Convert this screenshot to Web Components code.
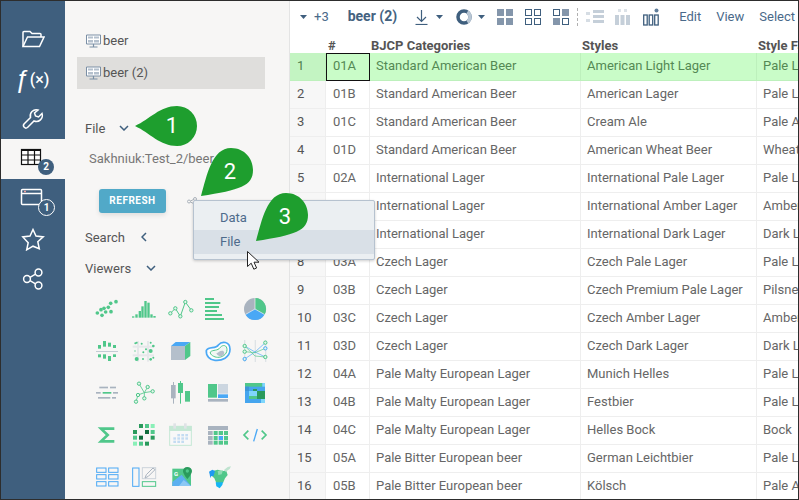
<!DOCTYPE html>
<html>
<head>
<meta charset="utf-8">
<style>
html, body { margin: 0; padding: 0; background: #fff; }
body { font-family: Roboto, "Liberation Sans", sans-serif; }
</style>
</head>
<body>
<app-shell>
    <side-nav slot="nav"></side-nav>
    <tool-panel slot="panel"></tool-panel>
    <grid-toolbar slot="grid"></grid-toolbar>
    <data-grid slot="grid"></data-grid>
    <context-menu slot="over"></context-menu>
    <callout-pin slot="over" label="1" kind="left" style="left:135px;top:106px"></callout-pin>
    <callout-pin slot="over" label="2" kind="down" style="left:201px;top:148px"></callout-pin>
    <callout-pin slot="over" label="3" kind="down" style="left:256px;top:193px"></callout-pin>
    <mouse-cursor slot="over" style="left:247px;top:251px"></mouse-cursor>
</app-shell>
<script>
const shell = document.createElement('template');
shell.innerHTML = `
    <style>
    :host {
        display: block;
        position: relative;
        width: 799px;
        height: 500px;
        box-sizing: border-box;
        border: 1px solid #2d2d2d;
        overflow: hidden;
        background: #fff;
    }
    .layout { display: flex; height: 100%; }
    .grid-area { flex: 1; min-width: 0; display: flex; flex-direction: column; overflow: hidden; }
    </style>
    <div class="layout">
        <slot name="nav"></slot>
        <slot name="panel"></slot>
        <div class="grid-area"><slot name="grid"></slot></div>
    </div>
    <slot name="over"></slot>
`;
customElements.define('app-shell', class extends HTMLElement {
    constructor() {
        super();
        this.attachShadow({mode: 'open'}).appendChild(shell.content.cloneNode(true));
    }
});

const navIcons = {
    folder: `<path d="M2 19.5V5.500a1 1 0 0 1 1-1h6l2 2h8a1 1 0 0 1 1 1v2.500"/><path d="M2 19.500l4.500-9.500H23l-4.500 9.500z"/>`,
    wrench: `<path d="M21 6.500l-3.500 3.500-3-1-1-3L17 3a6 6 0 0 0-7.500 7.500L3 17a2.500 2.500 0 0 0 3.500 3.500L13 14a6 6 0 0 0 8-7.500z"/>`,
    table: `<g stroke="#111" stroke-width="1.200"><rect x="1.500" y="3.500" width="19" height="15" fill="#fff"/><path d="M1.500 4.500h19M1.500 9h19M1.500 14h19M8 4v14M14.500 4v14"/></g>`,
    window: `<rect x="1.500" y="3.500" width="20" height="15" rx="1"/><path d="M1.500 7.500h20"/><path d="M4 5.500h2" stroke="#f0a0a0"/>`,
    star: `<path d="M12 2.500l3 6.600 7.200.8-5.400 4.800 1.500 7.100L12 19.200l-6.300 3.600 1.500-7.100L1.800 9.900 9 9.100z"/>`,
    share: `<circle cx="6" cy="12" r="3.400"/><circle cx="17.500" cy="5.500" r="3.400"/><circle cx="17.500" cy="18.500" r="3.400"/><path d="M9 10.300l5.500-3.100M9 13.700l5.500 3.100"/>`
};

const nav = document.createElement('template');
nav.innerHTML = `
    <style>
    :host {
        display: flex;
        flex-direction: column;
        width: 64px;
        flex: none;
        padding-top: 18px;
        box-sizing: border-box;
        height: 100%;
        background: #3f5f7e;
    }
    .item {
        position: relative;
        height: 40px;
        display: flex;
        align-items: center;
        justify-content: center;
        color: #fff;
    }
    .item.on { background: #f7f6f5; }
    svg { width: 24px; height: 24px; fill: none; stroke: #fff; stroke-width: 1.500; display: block; }
    .fx { display: flex; align-items: center; margin-left: -1px; }
    .fx i { font: 25px "Liberation Sans", sans-serif; }
    .fx span { font: 500 16px Roboto, sans-serif; }
    .badge {
        position: absolute;
        left: 37px;
        top: 20px;
        width: 16px;
        height: 16px;
        border-radius: 50%;
        background: #3f5f7e;
        color: #fff;
        font: 700 10px/16px Roboto, sans-serif;
        text-align: center;
    }
    .badge.ring { box-sizing: border-box; border: 1px solid #fff; line-height: 15px; width: 17px; height: 17px; }
    </style>
    <div class="item"><svg viewBox="0 0 24 24">${navIcons.folder}</svg></div>
    <div class="item"><div class="fx"><i>ƒ</i><span>(×)</span></div></div>
    <div class="item"><svg viewBox="0 0 24 24">${navIcons.wrench}</svg></div>
    <div class="item on"><svg viewBox="0 0 24 24" style="margin:-3px 2px 0 0">${navIcons.table}</svg><div class="badge">2</div></div>
    <div class="item"><svg viewBox="0 0 24 24" style="margin:-3px 2px 0 0">${navIcons.window}</svg><div class="badge ring">1</div></div>
    <div class="item"><svg viewBox="0 0 24 24">${navIcons.star}</svg></div>
    <div class="item"><svg viewBox="0 0 24 24">${navIcons.share}</svg></div>
`;
customElements.define('side-nav', class extends HTMLElement {
    constructor() {
        super();
        this.attachShadow({mode: 'open'}).appendChild(nav.content.cloneNode(true));
    }
});

// coordinates of the viewer icons are in 3x units of the crop they were read from
const G = '#50c78a', B = '#4aa8f5', S = '#a9b3bf', D = '#2a9a5c';
const rects = (list, fill) => list.map(r => `<rect x="${r[0]}" y="${r[1]}" width="${r[2]}" height="${r[3]}" fill="${r[4] || fill}"/>`).join('');
const dots = (list, fill, r) => list.map(p => `<circle cx="${p[0]}" cy="${p[1]}" r="${p[2] || r}" fill="${fill}"/>`).join('');
const rings = (list, color) => list.map(p => `<circle cx="${p[0]}" cy="${p[1]}" r="5" fill="#e4f5ec" stroke="${p[2] || color}" stroke-width="3"/>`).join('');

const viewers = [
    [66, 54, dots([[37,66],[51,73],[48,56],[62,63],[70,49],[77,37],[93,32],[78,62],[57,52]], G, 5.500)],
    [177, 54, rects([[141,76,7,4],[151,70,7,10],[161,60,7,20],[169,46,7,34],[178,30,7,50],[187,35,7,45],[196,70,7,10],[205,75,7,5]], G)],
    [288, 54, `<polyline points="256,67 271,52 286,76 301,33 319,58" fill="none" stroke="${G}" stroke-width="3"/>` + rings([[256,67],[271,52],[286,76],[301,33],[319,58]], G)],
    [399, 54, rects([[360,21,27,6],[360,33,46,6],[360,45,42,6],[360,57,36,6],[360,69,51,6],[360,81,57,6]], G)],
    [510, 54, `<circle cx="510" cy="54" r="33" fill="${S}"/><path d="M510 54V21a33 33 0 0 1 28.600 49.500z" fill="${G}"/><path d="M510 54l28.600 16.500a33 33 0 0 1-57.200 0z" fill="${B}"/><path d="M510 21v33l28.600 16.500M510 54l-28.600 16.500" stroke="#f7f6f5" stroke-width="2" fill="none"/>`],

    [66, 180, rects([[33,180,66,3,'#c4ccd4'],[39,162,9,11],[54,150,9,17],[69,155,9,12],[84,162,9,9],[39,190,9,9],[54,190,9,13],[69,195,9,15],[84,190,9,8]], G)],
    [177, 180, rects([[143,164,64,6,'#e6e8ea'],[143,190,64,6,'#e6e8ea'],[156,150,6,62,'#e6e8ea'],[186,150,6,62,'#e6e8ea']]) + dots([[151,157,3],[155,155,3],[170,158,3],[197,155,3],[205,165,4],[183,175,3],[197,180,6],[175,184,3],[155,204,6],[174,204,3],[197,205,4],[205,200,3],[150,180,2]], G)],
    [288, 180, `<rect x="258" y="165" width="42" height="42" fill="#b4bfcb"/><path d="M258 165l14-12h44l-16 12z" fill="${B}"/><path d="M300 165l16-12v42l-16 12z" fill="${G}"/>`],
    [399, 180, `<path d="M364 178c8-13 28-3 36-16 10-12 35-12 35 13s-25 35-45 33c-15-1-28-13-26-30z" fill="#fff" stroke="${B}" stroke-width="5"/><path d="M376 183c8-8 22-2 30-14 8-9 20-7 20 7 0 15-16 24-28 23-10 0-24-8-22-16z" fill="#f2f7f4" stroke="${G}" stroke-width="3"/><path d="M394 187c6-2 10-8 17-8 7 0 9 8 4 14-5 5-15 5-21-6z" fill="#b4bfcb"/>`],
    [510, 180, rects([[509,147,4,66,'#dfe3e6'],[540,147,4,66,'#dfe3e6'],[477,147,4,66,'#dfe3e6']]) + `<path d="M479 165l31 18 31-28M479 204l31-21 31 15" fill="none" stroke="${B}" stroke-width="2"/><path d="M479 182l31 3 31-13M479 165l31 30 31 3" fill="none" stroke="${G}" stroke-width="2"/>` + rings([[479,165],[479,182],[479,204,B],[541,155],[541,172,B],[541,198]], G)],

    [66, 66, rects([[43,47,26,5],[75,47,18,5],[33,63,14,5],[84,63,15,5],[39,78,37,5],[81,78,12,5]], S) + rects([[53,63,26,5]], G)],
    [177, 66, `<path d="M178 65L162 38M178 65l10-17M178 65l25-4M178 65v17M178 65l-19 7M159 72l-6 20" stroke="${G}" stroke-width="2.500" fill="none"/>` + rings([[162,38],[188,48],[203,61],[178,82],[159,72],[153,92]], G)],
    [288, 66, rects([[264,33,3,65],[258,42,14,40]], S) + rects([[285,30,3,68],[279,36,15,30],[300,60,15,32]], G)],
    [399, 66, rects([[369,39,27,41]], G) + rects([[399,39,30,29,'#ccd6e0'],[399,70,30,11,B],[369,84,60,8,S]])],
    [510, 66, rects([[480,36,60,60,'#45a5ee'],[480,36,52,11,G],[532,36,8,11,'#7fd6fb'],[504,54,12,10,D],[516,60,24,24,D],[492,60,24,15,'#7fd6fb'],[492,75,24,9,G],[480,47,12,13,'#3d96d6'],[528,84,12,12,'#7fd6fb']])],

    [66, 192, `<polyline points="88,173 48,173 68,192 48,211 88,211" fill="none" stroke="${G}" stroke-width="8"/>`],
    [177, 192, rects([[162,159,12,12,D],[180,159,12,12,G],[197,159,12,12,'#8af0b8'],[144,177,12,12,D],[180,177,12,12,'#0e6b3a'],[197,177,12,12,G],[144,194,12,12,G],[162,194,12,12,'#0e6b3a'],[197,194,12,12,D],[144,212,12,12,'#8af0b8'],[162,212,12,12,G],[180,212,12,12,D]])],
    [288, 192, `<rect x="254" y="166" width="65" height="57" fill="#f8f8f8" stroke="#c5e8d5" stroke-width="3"/>` + rects([[253,165,67,15,'#c5e8d5'],[265,157,8,16,'#dfe3e6'],[297,157,8,16,'#dfe3e6']]) + rects([[277,189,8,7],[289,189,8,7],[301,189,8,7],[265,199,8,7],[277,199,8,7],[289,199,8,7],[301,199,8,7],[265,209,8,7],[277,209,8,7],[289,209,8,7]], '#c4dcf2')],
    [399, 192, rects([[369,165,60,12],[369,180,14,12],[369,195,14,12],[369,209,14,12]], S) + rects([[386,180,12,12],[401,180,13,12],[417,180,12,12],[386,195,12,12],[417,195,12,12],[386,209,12,12],[401,209,13,12],[417,209,12,12]], G) + rects([[401,195,13,12]], B)],
    [510, 192, `<path d="M490 179l-13 13 13 13M530 179l13 13-13 13" fill="none" stroke="${G}" stroke-width="5"/><path d="M517 174l-11 37" stroke="${B}" stroke-width="4"/>`],

    [66, 318, `<g fill="none" stroke="${B}" stroke-width="3">` + [[35,291],[71,291],[35,311],[71,311],[35,332],[71,332]].map(p => `<rect x="${p[0]}" y="${p[1]}" width="28" height="13"/>`).join('') + `</g>`],
    [177, 318, `<rect x="143" y="291" width="19" height="55" fill="none" stroke="${B}" stroke-width="3"/><rect x="172" y="290" width="40" height="33" fill="none" stroke="#ccd3da" stroke-width="3"/><path d="M180 321l4-10 20-20 6 5-20 20z" fill="#f7f6f5" stroke="${S}" stroke-width="3"/><rect x="172" y="332" width="40" height="14" fill="none" stroke="${G}" stroke-width="3"/>`],
    [288, 318, `<rect x="262" y="293" width="56" height="52" fill="${G}"/><path d="M262 345v-12l28-22 28 34z" fill="#5cb0f0"/><path d="M282 345l14-18 22 18z" fill="#8cc8f5"/><path d="M307 288c-8 0-13 6-13 12 0 9 13 24 13 24s14-15 14-24c0-6-6-12-14-12z" fill="${D}"/><circle cx="307" cy="300" r="5" fill="${G}"/><text x="267" y="314" font-family="Roboto, sans-serif" font-weight="700" font-size="18" fill="#fff">G</text>`],
    [399, 318, `<path d="M384 300l14-4 14 4h12l4 12-8 10-6 14h-20l-6-14-8-8z" fill="${G}"/><path d="M372 302l10-6 8 4-4 14-8 2-2 6-2-12z" fill="#1f9af2"/><path d="M392 334h22l-2 8-8 10-10-6z" fill="#14b4f5"/><path d="M416 298l12-10 10-2-4 8-12 8z" fill="#bfe3cf"/><path d="M398 300l16-2-4 12-10 2z" fill="#8fdcb4"/>`]
];

const vicon = document.createElement('template');
vicon.innerHTML = `
    <style>
    :host { display: flex; align-items: center; justify-content: center; width: 37px; height: 42px; }
    svg { width: 30px; height: 30px; display: block; overflow: visible; }
    </style>
    <svg></svg>
`;
customElements.define('viewer-icon', class extends HTMLElement {
    constructor() {
        super();
        this.attachShadow({mode: 'open'}).appendChild(vicon.content.cloneNode(true));
    }
    connectedCallback() {
        let v = viewers[+this.getAttribute('index')];
        let svg = this.shadowRoot.querySelector('svg');
        svg.setAttribute('viewBox', `${v[0] - 45} ${v[1] - 45} 90 90`);
        svg.innerHTML = v[2];
    }
});

const chev = {
    down: '<svg viewBox="0 0 10 6" width="10" height="6"><path d="M1 1l4 4 4-4" fill="none" stroke="#3f5f7e" stroke-width="1.500"/></svg>',
    left: '<svg viewBox="0 0 6 10" width="6" height="10"><path d="M5 1L1 5l4 4" fill="none" stroke="#3f5f7e" stroke-width="1.500"/></svg>'
};
const tableIcon = '<svg viewBox="0 0 15 14" width="15" height="14"><path d="M.5 1h14v9H.5z" fill="#fff" stroke="#7b8fa5"/><path d="M2 2.500h5v2H2zM8 2.500h5v2H8zM2 6h5v2.500H2zM8 6h5v2.500H8z" fill="#b4c0cd"/><path d="M7.500 10v2.500M3.500 13h8" stroke="#7b8fa5" stroke-width="1.200"/></svg>';

const panel = document.createElement('template');
panel.innerHTML = `
    <style>
    :host {
        display: block;
        width: 225px;
        flex: none;
        height: 100%;
        box-sizing: border-box;
        padding-top: 24px;
        background: #f7f6f5;
        border-right: 1px solid #e4e4e4;
        color: #555;
        font: 13px Roboto, sans-serif;
        overflow: hidden;
    }
    .table {
        display: flex;
        align-items: center;
        gap: 2px;
        width: 188px;
        height: 32px;
        margin-left: 12px;
        padding: 0 0 2px 9px;
        box-sizing: border-box;
    }
    .table.on { background: #dfdedc; }
    .table svg { margin-top: 2px; }
    .head { display: flex; align-items: center; height: 24px; margin-left: 20px; gap: 14px; color: #555; }
    .head svg { display: block; }
    .path { margin: 10px 0 0 24px; height: 18px; line-height: 18px; color: #777; white-space: nowrap; }
    .actions { display: flex; align-items: center; margin: 21px 0 0 34px; }
    .refresh {
        width: 67px;
        height: 24px;
        border-radius: 3px;
        background: #51a9c8;
        color: #fff;
        font: 700 10px/24px Roboto, sans-serif;
        letter-spacing: .5px;
        text-align: center;
        box-shadow: 0 2px 5px rgba(0,0,0,.1);
    }
    .actions svg { margin: 0 0 0 21px; }
    .viewers { display: grid; grid-template-columns: repeat(5, 37px); grid-auto-rows: 42px; margin: 7px 0 0 23.500px; }
    </style>
    <div class="table">${tableIcon}<span>beer</span></div>
    <div class="table on">${tableIcon}<span>beer (2)</span></div>
    <div class="head" style="margin-top:27px"><span>File</span>${chev.down}</div>
    <div class="path">Sakhniuk:Test_2/beer</div>
    <div class="actions">
        <div class="refresh">REFRESH</div>
        <svg viewBox="0 0 10 9" width="10" height="9" fill="none" stroke="#aab2ba"><circle cx="2" cy="4.500" r="1.500"/><circle cx="8" cy="2" r="1.500"/><circle cx="8" cy="7" r="1.500"/><path d="M3.500 4l3-1.500M3.500 5l3 1.500"/></svg>
    </div>
    <div class="head" style="margin-top:12px;gap:16px"><span>Search</span>${chev.left}</div>
    <div class="head" style="margin-top:7px;gap:15px"><span>Viewers</span>${chev.down}</div>
    <div class="viewers" style="margin-top:8px"></div>
`;
customElements.define('tool-panel', class extends HTMLElement {
    constructor() {
        super();
        let shadow = this.attachShadow({mode: 'open'});
        shadow.appendChild(panel.content.cloneNode(true));
        let box = shadow.querySelector('.viewers');
        viewers.forEach((v, i) => {
            let el = document.createElement('viewer-icon');
            el.setAttribute('index', i);
            box.appendChild(el);
        });
    }
});

const caret = ml => `<svg style="margin-left:${ml}px" viewBox="0 0 7 4" width="7" height="4"><path d="M0 0h7L3.500 4z" fill="#3f5f7e"/></svg>`;
const quad = (ml, fills) => {
    let pos = [[0,0],[9,0],[0,9],[9,9]];
    return `<svg style="margin-left:${ml}px" viewBox="0 0 16 16" width="16" height="16">` + pos.map((p, i) =>
        `<rect x="${p[0] + .5}" y="${p[1] + .5}" width="6" height="6" fill="${fills[i] ? '#8496ab' : 'none'}" stroke="${fills[i] === 2 ? '#8496ab' : '#3f5f7e'}"/>`).join('') + `</svg>`;
};
const bar = document.createElement('template');
bar.innerHTML = `
    <style>
    :host {
        display: flex;
        align-items: center;
        flex: none;
        height: 30px;
        padding-left: 10px;
        color: #4a6a8a;
        font: 13px Roboto, sans-serif;
        white-space: nowrap;
    }
    svg { display: block; flex: none; margin-top: 2px; }
    b { font: 700 14px Roboto, sans-serif; color: #44627f; }
    .sep { width: 0; height: 18px; margin-top: 2px; border-left: 1px dashed #b0b0b0; }
    </style>
    ${caret(0)}
    <span style="margin-left:7px">+3</span>
    <b style="margin-left:19px">beer (2)</b>
    <svg style="margin-left:18px" viewBox="0 0 13 15" width="13" height="15" fill="none" stroke="#3f5f7e" stroke-width="1.200"><path d="M6.500 0v11M2 7l4.500 4.500L11 7"/><path d="M.5 14.500h12"/></svg>
    ${caret(8)}
    <svg style="margin-left:13px" viewBox="0 0 16 16" width="16" height="16" fill="none" stroke-width="3.500"><circle cx="8" cy="8" r="6" stroke="#3f5f7e"/><path d="M11.300 3a6 6 0 0 1 0 10" stroke="#b8c6d4"/></svg>
    ${caret(6)}
    ${quad(12, [2,2,2,2])}
    ${quad(12, [0,0,0,0])}
    ${quad(12, [0,2,2,0])}
    <div class="sep" style="margin-left:8px"></div>
    <svg style="margin-left:8px" viewBox="0 0 18 16" width="18" height="16" fill="#c5cfd9"><path d="M0 3h4v3H0zM0 10h4v3H0z" opacity=".7"/><path d="M7 1h11v3H7zM7 6h11v3H7zM7 11h11v3H7z"/></svg>
    <svg style="margin-left:11px" viewBox="0 0 15 18" width="15" height="18" fill="#c5cfd9"><path d="M3 1h3v3H3zM9 1h3v3H9z" opacity=".6"/><path d="M0 7h4v10H0zM5.500 7h4v10h-4zM11 7h4v10h-4z"/></svg>
    <svg style="margin-left:13px" viewBox="0 0 16 18" width="16" height="18" fill="none" stroke="#3f5f7e" stroke-width="1.300"><rect x=".7" y="7" width="3.500" height="10"/><rect x="6.200" y="7" width="3.500" height="10"/><rect x="11.700" y="7" width="3.500" height="10"/><circle cx="13.500" cy="2.500" r="2" fill="#5f7d9b" stroke="none"/></svg>
    <span style="margin-left:20px">Edit</span>
    <span style="margin-left:15px">View</span>
    <span style="margin-left:15px">Select</span>
`;
customElements.define('grid-toolbar', class extends HTMLElement {
    constructor() {
        super();
        this.attachShadow({mode: 'open'}).appendChild(bar.content.cloneNode(true));
    }
});

const beers = [
    ['1','01A','Standard American Beer','American Light Lager','Pale Lager'],
    ['2','01B','Standard American Beer','American Lager','Pale Lager'],
    ['3','01C','Standard American Beer','Cream Ale','Pale Ale'],
    ['4','01D','Standard American Beer','American Wheat Beer','Wheat Beer'],
    ['5','02A','International Lager','International Pale Lager','Pale Lager'],
    ['6','02B','International Lager','International Amber Lager','Amber Lager'],
    ['7','02C','International Lager','International Dark Lager','Dark Lager'],
    ['8','03A','Czech Lager','Czech Pale Lager','Pale Lager'],
    ['9','03B','Czech Lager','Czech Premium Pale Lager','Pilsner'],
    ['10','03C','Czech Lager','Czech Amber Lager','Amber Lager'],
    ['11','03D','Czech Lager','Czech Dark Lager','Dark Lager'],
    ['12','04A','Pale Malty European Lager','Munich Helles','Pale Lager'],
    ['13','04B','Pale Malty European Lager','Festbier','Pale Lager'],
    ['14','04C','Pale Malty European Lager','Helles Bock','Bock'],
    ['15','05A','Pale Bitter European beer','German Leichtbier','Pale Lager'],
    ['16','05B','Pale Bitter European beer','Kölsch','Pale Ale']
];

const grid = document.createElement('template');
grid.innerHTML = `
    <style>
    :host {
        display: block;
        flex: 1;
        min-height: 0;
        padding-top: 6px;
        overflow: hidden;
        font: 13px Roboto, sans-serif;
        color: #666;
    }
    .row { display: grid; grid-template-columns: 36px 44px 211px 176px 200px; height: 28px; box-sizing: border-box; }
    .row > div {
        padding-left: 6px;
        line-height: 25px;
        white-space: nowrap;
        overflow: hidden;
        box-sizing: border-box;
        border-right: 1px solid #eee;
        border-bottom: 1px solid #eee;
    }
    .row > div:first-child { background: #f7f7f7; color: #555; padding-left: 7px; }
    .row > div:nth-child(2) { padding-left: 7px; }
    .head { height: 16px; font-weight: 700; color: #555; }
    .head > div { line-height: 17px; padding-left: 1px !important; border: 0 !important; background: none !important; }
    .head > div:nth-child(2) { padding-left: 2px !important; }
    .row.sel > div { background: #c9fcc8; color: #548954; border-color: #bdf0bc; }
    .row.sel > div:first-child { background: #c3f4c2; color: #4f7f4f; }
    .row.sel > div.cur { border: 1px solid #111; padding-left: 6px; line-height: 24px; }
    </style>
    <div class="row head"><div></div><div>#</div><div>BJCP Categories</div><div>Styles</div><div>Style Family</div></div>
`;
customElements.define('data-grid', class extends HTMLElement {
    constructor() {
        super();
        let shadow = this.attachShadow({mode: 'open'});
        shadow.appendChild(grid.content.cloneNode(true));
        beers.forEach((b, i) => {
            let row = document.createElement('div');
            row.className = i == 0 ? 'row sel' : 'row';
            b.forEach((text, c) => {
                let cell = document.createElement('div');
                if (i == 0 && c == 1) cell.className = 'cur';
                cell.textContent = text;
                row.appendChild(cell);
            });
            shadow.appendChild(row);
        });
    }
});

const menu = document.createElement('template');
menu.innerHTML = `
    <style>
    :host {
        position: absolute;
        left: 192px;
        top: 199px;
        width: 182px;
        height: 60px;
        box-sizing: border-box;
        padding: 5px 0;
        background: #ebeff2;
        border: 1px solid #b6c2cf;
        border-radius: 2px;
        box-shadow: 0 1px 3px rgba(0,0,0,.2);
        color: #4e6b8c;
        font: 13px Roboto, sans-serif;
    }
    div { height: 24px; line-height: 24px; padding-left: 26px; }
    .on { background: #d9e0e7; }
    </style>
    <div>Data</div>
    <div class="on">File</div>
`;
customElements.define('context-menu', class extends HTMLElement {
    constructor() {
        super();
        this.attachShadow({mode: 'open'}).appendChild(menu.content.cloneNode(true));
    }
});

const pinShapes = {
    left: {w: 62, h: 40, lx: 37, ly: 20, d: 'M0 20C15 13 25 0 42 0a20 20 0 0 1 0 40C25 40 15 27 0 20z'},
    down: {w: 52, h: 48, lx: 29, ly: 24, d: 'M0 48C6 27 11 0 30 0c14 0 22 11 22 22 0 16-13 20-52 26z'}
};
customElements.define('callout-pin', class extends HTMLElement {
    constructor() {
        super();
        this.attachShadow({mode: 'open'});
    }
    connectedCallback() {
        let p = pinShapes[this.getAttribute('kind')];
        this.shadowRoot.innerHTML = `
            <style>
            :host { position: absolute; display: block; width: ${p.w}px; height: ${p.h}px; margin: -1px 0 0 -1px; }
            svg { display: block; }
            span {
                position: absolute;
                left: ${p.lx - 15}px;
                top: ${p.ly - 15}px;
                width: 30px;
                height: 30px;
                text-align: center;
                color: #fff;
                font: 22px/30px Roboto, sans-serif;
            }
            </style>
            <svg viewBox="0 0 ${p.w} ${p.h}" width="${p.w}" height="${p.h}"><path d="${p.d}" fill="#1e9e2e"/></svg>
            <span>${this.getAttribute('label')}</span>
        `;
    }
});

const cursor = document.createElement('template');
cursor.innerHTML = `
    <style>
    :host { position: absolute; display: block; width: 13px; height: 19px; margin: -1px 0 0 -1px; }
    svg { display: block; }
    </style>
    <svg viewBox="0 0 13 19" width="13" height="19"><path d="M.5.500v15l3.700-3.300 2.600 6 2.800-1.200-2.600-5.800H12z" fill="#fff" stroke="#222"/></svg>
`;
customElements.define('mouse-cursor', class extends HTMLElement {
    constructor() {
        super();
        this.attachShadow({mode: 'open'}).appendChild(cursor.content.cloneNode(true));
    }
});
</script>
</body>
</html>
